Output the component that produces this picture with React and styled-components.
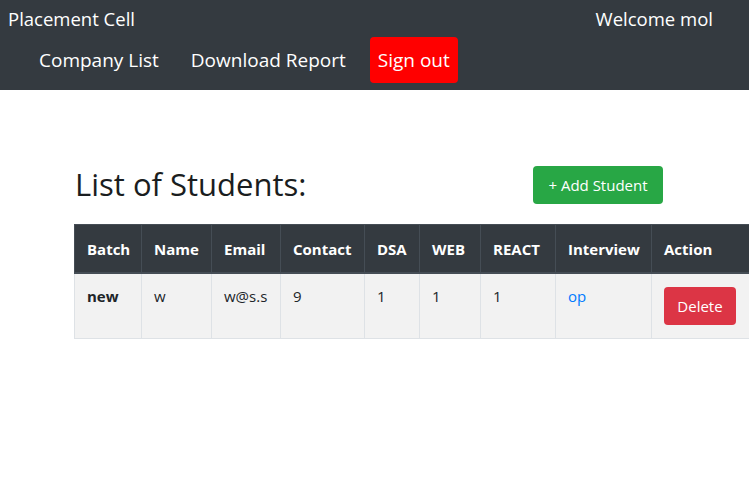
import React from "react";
import styled, { createGlobalStyle } from "styled-components";

const GlobalStyle = createGlobalStyle`
  body {
    margin: 0;
    font-family: "Open Sans", "Noto Sans", sans-serif;
    color: #212529;
    background: #fff;
    overflow: hidden;
  }
`;

const Navbar = styled.nav`
  background-color: #343a40;
  height: 90px;
  box-sizing: border-box;
  padding: 0 8px;
  color: #fff;
`;

const TopRow = styled.div`
  display: flex;
  justify-content: space-between;
  align-items: center;
  height: 36px;
  font-size: 18.5px;
`;

const Welcome = styled.div`
  margin-right: 28px;
`;

const NavLinks = styled.div`
  display: flex;
  align-items: center;
  gap: 32px;
  padding-left: 31px;
  height: 47px;
`;

const NavLink = styled.a`
  color: #fff;
  font-size: 19px;
  text-decoration: none;
  cursor: pointer;
`;

const SignOut = styled.button`
  background: #ff0000;
  color: #fff;
  border: none;
  border-radius: 4px;
  font-family: inherit;
  font-size: 19px;
  height: 46px;
  padding: 0 8px;
  margin-left: -8px;
  cursor: pointer;
`;

const Main = styled.main`
  padding: 76px 0 0 74px;
`;

const HeadingRow = styled.div`
  display: flex;
  align-items: center;
  width: 589px;
  justify-content: space-between;
  height: 38px;
  margin-bottom: 20px;
`;

const Title = styled.h2`
  margin: 0 0 0 1px;
  font-size: 31px;
  font-weight: 500;
  line-height: 1.2;
  color: #1a1d20;
`;

const AddButton = styled.button`
  background: #28a745;
  color: #fff;
  border: none;
  border-radius: 4px;
  font-family: inherit;
  font-size: 15px;
  height: 38px;
  width: 130px;
  cursor: pointer;
`;

const Table = styled.table`
  border-collapse: collapse;
  font-size: 15px;
  width: 700px;
  table-layout: fixed;
`;

const Th = styled.th`
  background: #343a40;
  color: #fff;
  font-weight: 700;
  text-align: left;
  padding: 0 12px;
  height: 47px;
  border: 1px solid #454d55;
  border-bottom: 2px solid #454d55;
  white-space: nowrap;
`;

const Td = styled.td`
  background: #f2f2f2;
  padding: 12px;
  vertical-align: top;
  border: 1px solid #dee2e6;
  font-weight: ${(p) => (p.$bold ? 700 : 400)};
  height: 40px;
`;

const InterviewLink = styled.a`
  color: #007bff;
  text-decoration: none;
`;

const DeleteButton = styled.button`
  background: #dc3545;
  color: #fff;
  border: none;
  border-radius: 4px;
  font-family: inherit;
  font-size: 15px;
  height: 38px;
  width: 72px;
  margin-top: 1px;
  cursor: pointer;
`;

const columns = [
  ["Batch", 67],
  ["Name", 70],
  ["Email", 69],
  ["Contact", 84],
  ["DSA", 55],
  ["WEB", 61],
  ["REACT", 75],
  ["Interview", 96],
  ["Action", 123],
];

export default function App() {
  return (
    <>
      <GlobalStyle />
      <Navbar>
        <TopRow>
          <span>Placement Cell</span>
          <Welcome>Welcome mol</Welcome>
        </TopRow>
        <NavLinks>
          <NavLink>Company List</NavLink>
          <NavLink>Download Report</NavLink>
          <SignOut>Sign out</SignOut>
        </NavLinks>
      </Navbar>
      <Main>
        <HeadingRow>
          <Title>List of Students:</Title>
          <AddButton>+ Add Student</AddButton>
        </HeadingRow>
        <Table>
          <colgroup>
            {columns.map(([name, w]) => (
              <col key={name} style={{ width: w }} />
            ))}
          </colgroup>
          <thead>
            <tr>
              {columns.map(([name]) => (
                <Th key={name}>{name}</Th>
              ))}
            </tr>
          </thead>
          <tbody>
            <tr>
              <Td $bold>new</Td>
              <Td>w</Td>
              <Td>w@s.s</Td>
              <Td>9</Td>
              <Td>1</Td>
              <Td>1</Td>
              <Td>1</Td>
              <Td>
                <InterviewLink>op</InterviewLink>
              </Td>
              <Td>
                <DeleteButton>Delete</DeleteButton>
              </Td>
            </tr>
          </tbody>
        </Table>
      </Main>
    </>
  );
}
